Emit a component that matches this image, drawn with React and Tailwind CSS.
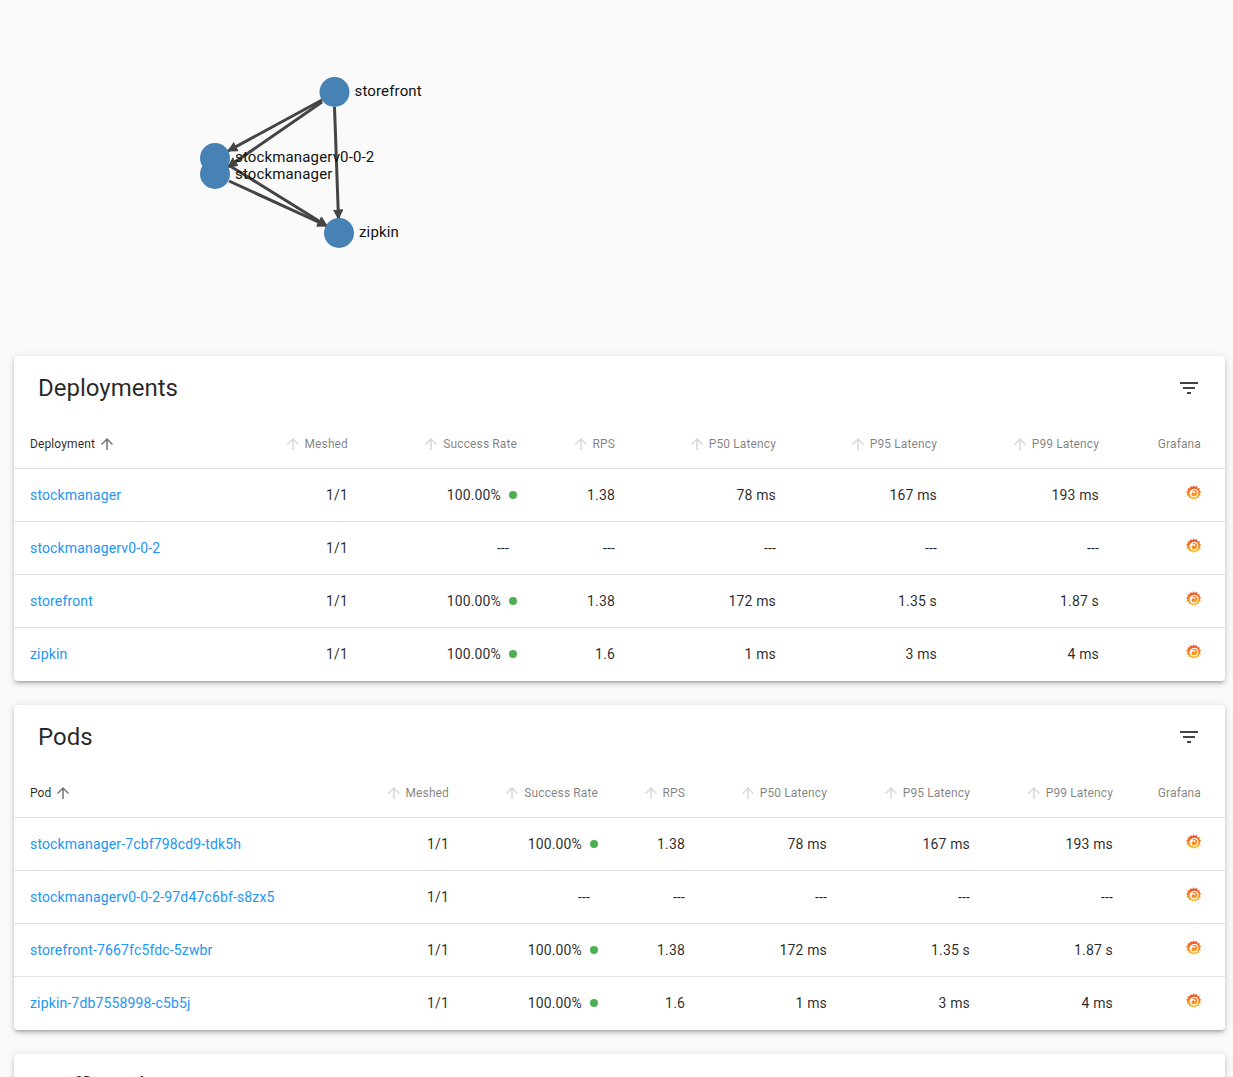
import React from "react";

const FONT = "font-['Roboto',sans-serif]";

const deployments = [
  ["stockmanager", "1/1", "100.00%", "1.38", "78 ms", "167 ms", "193 ms"],
  ["stockmanagerv0-0-2", "1/1", null, "---", "---", "---", "---"],
  ["storefront", "1/1", "100.00%", "1.38", "172 ms", "1.35 s", "1.87 s"],
  ["zipkin", "1/1", "100.00%", "1.6", "1 ms", "3 ms", "4 ms"],
];

const pods = [
  ["stockmanager-7cbf798cd9-tdk5h", "1/1", "100.00%", "1.38", "78 ms", "167 ms", "193 ms"],
  ["stockmanagerv0-0-2-97d47c6bf-s8zx5", "1/1", null, "---", "---", "---", "---"],
  ["storefront-7667fc5fdc-5zwbr", "1/1", "100.00%", "1.38", "172 ms", "1.35 s", "1.87 s"],
  ["zipkin-7db7558998-c5b5j", "1/1", "100.00%", "1.6", "1 ms", "3 ms", "4 ms"],
];

const columns = ["Meshed", "Success Rate", "RPS", "P50 Latency", "P95 Latency", "P99 Latency"];

function ArrowUp({ className }) {
  return (
    <svg viewBox="0 0 24 24" className={`h-[18px] w-[18px] shrink-0 fill-current ${className}`}>
      <path d="M4 12l1.41 1.41L11 7.83V20h2V7.83l5.58 5.59L20 12l-8-8-8 8z" />
    </svg>
  );
}

function FilterIcon() {
  return (
    <svg viewBox="0 0 24 24" className="h-6 w-6 fill-[#444]">
      <path d="M10 18h4v-2h-4v2zM3 6v2h18V6H3zm3 7h12v-2H6v2z" />
    </svg>
  );
}

function GrafanaIcon({ id }) {
  return (
    <svg viewBox="0 0 24 24" className="ml-auto h-[15px] w-[15px] -translate-y-[2px]">
      <defs>
        <linearGradient id={id} x1="0.5" y1="1" x2="0.5" y2="0">
          <stop offset="0" stopColor="#fcc21b" />
          <stop offset="0.5" stopColor="#f5821f" />
          <stop offset="1" stopColor="#e8452c" />
        </linearGradient>
      </defs>
      <path
        fill={`url(#${id})`}
        d="M12 0.500l2.200 2.800 3.200-1.600 1 3.400 3.500.2-.5 3.500 3 1.800-2.300 2.600 1.600 3.100-3.300 1.200-.1 3.500-3.400-.6-1.700 3-2.900-2-2.800 2.100-1.700-3-3.400.6-.1-3.500L0.800 16.400l1.500-3.100L0 10.700l3-1.800-.5-3.500 3.500-.2 1-3.400 3.200 1.600z"
      />
      <path
        fill="none"
        stroke="#fff"
        strokeWidth="2"
        strokeLinecap="round"
        d="M7 15a6.500 6.500 0 0 1 10.500-6.500a6.800 6.800 0 0 1 1 7a6.500 6.500 0 0 1-9.500 2.500a4.500 4.500 0 0 1 0-6.500a3.800 3.800 0 0 1 5.500 .5"
      />
    </svg>
  );
}

function HeaderCell({ label, last }) {
  if (last) {
    return <th className="pl-4 pr-6 text-right text-xs font-normal tracking-[0.12px] text-black/50">{label}</th>;
  }
  return (
    <th className="px-4 text-xs font-normal tracking-[0.12px] text-black/50">
      <span className="flex items-center justify-end gap-[3px]">
        <ArrowUp className="opacity-30" />
        {label}
      </span>
    </th>
  );
}

function DataTable({ title, firstHeader, rows, widths, prefix }) {
  return (
    <section className="overflow-hidden rounded bg-white pb-px shadow-[0_3px_3px_-2px_rgba(0,0,0,0.2),0_3px_4px_0_rgba(0,0,0,0.14),0_1px_8px_0_rgba(0,0,0,0.12)]">
      <div className="flex h-16 items-center justify-between pl-6 pr-6">
        <h2 className="text-2xl font-normal text-black/85">{title}</h2>
        <FilterIcon />
      </div>
      {rows && (
        <table className="w-full table-fixed border-collapse">
          <colgroup>
            {widths.map((w, i) => (
              <col key={i} style={{ width: w }} />
            ))}
          </colgroup>
          <thead>
            <tr className="h-12 border-b border-[#e0e0e0]">
              <th className="px-4 text-left text-xs font-normal tracking-[0.12px] text-black/85">
                <span className="flex items-center gap-[3px]">
                  {firstHeader}
                  <ArrowUp className="text-black/55" />
                </span>
              </th>
              {columns.map((c) => (
                <HeaderCell key={c} label={c} />
              ))}
              <HeaderCell label="Grafana" last />
            </tr>
          </thead>
          <tbody>
            {rows.map((row, i) => (
              <tr key={row[0]} className={`h-[53px] text-sm tracking-[0.15px] text-black/85 ${i < rows.length - 1 ? "border-b border-[#e0e0e0]" : ""}`}>
                <td className="whitespace-nowrap px-4 text-left text-[#2196f3]">{row[0]}</td>
                <td className="px-4 text-right">{row[1]}</td>
                <td className="px-4 text-right">
                  {row[2] ? (
                    <span className="flex items-center justify-end gap-2">
                      {row[2]}
                      <span className="h-2 w-2 rounded-full bg-[#4caf50]" />
                    </span>
                  ) : (
                    <span className="pr-2">---</span>
                  )}
                </td>
                {row.slice(3).map((v, j) => (
                  <td key={j} className="px-4 text-right">{v}</td>
                ))}
                <td className="pl-4 pr-6">
                  <GrafanaIcon id={`${prefix}-grafana-${i}`} />
                </td>
              </tr>
            ))}
          </tbody>
        </table>
      )}
    </section>
  );
}

function Graph() {
  // coordinates are relative to the svg, which starts 14px in from the page
  const nodes = [
    { x: 320.5, y: 92, label: "storefront", dy: 4 },
    { x: 325, y: 233, label: "zipkin", dy: 4 },
    { x: 201, y: 158, label: "stockmanagerv0-0-2", dy: 4 },
    { x: 201, y: 174, label: "stockmanager", dy: 5 },
  ];
  const edges = [
    [308, 100, 214, 151],
    [308, 102, 214, 167],
    [320.5, 107, 324.5, 219],
    [215, 181, 313, 226],
    [216, 166, 313, 226],
  ];
  return (
    <div className="h-[356px]">
      <svg width="1211" height="356" className="block">
        <defs>
          <marker id="arrow" viewBox="0 0 10 10" refX="9" refY="5" markerWidth="3.5" markerHeight="3.5" orient="auto">
            <path d="M0 0L10 5L0 10z" fill="#444" />
          </marker>
        </defs>
        {edges.map((e, i) => (
          <line key={i} x1={e[0]} y1={e[1]} x2={e[2]} y2={e[3]} stroke="#444" strokeWidth="3" markerEnd="url(#arrow)" />
        ))}
        {nodes.map((n) => (
          <circle key={n.label} cx={n.x} cy={n.y} r="15" fill="#4682b4" />
        ))}
        {nodes.map((n) => (
          <text key={n.label} x={n.x + 20} y={n.y + n.dy} fontSize="15" letterSpacing="0.15" fill="#111">
            {n.label}
          </text>
        ))}
      </svg>
    </div>
  );
}

export default function App() {
  return (
    <div className={`h-[1077px] overflow-hidden bg-[#fafafa] pl-[14px] pr-2 ${FONT}`}>
      <Graph />
      <div className="flex flex-col gap-6">
        <DataTable
          title="Deployments"
          firstHeader="Deployment"
          rows={deployments}
          prefix="dep"
          widths={[256, 94, 169, 98, 161, 161, 162, 110]}
        />
        <DataTable
          title="Pods"
          firstHeader="Pod"
          rows={pods}
          prefix="pod"
          widths={[351, 100, 149, 87, 142, 143, 143, 96]}
        />
        <DataTable title="Traffic Splits" />
      </div>
    </div>
  );
}
